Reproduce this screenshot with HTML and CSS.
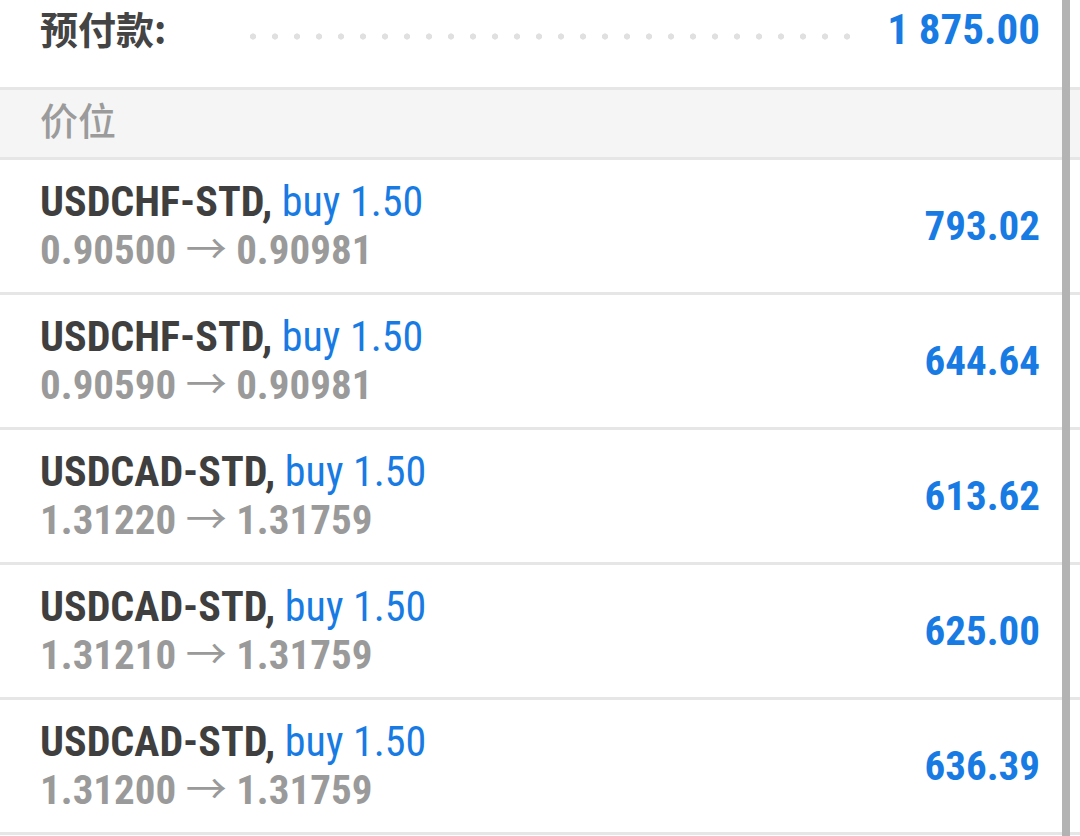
FILE: index.html
```html
<!DOCTYPE html>
<html lang="zh">
<head>
    <meta charset="UTF-8">
    <meta name="viewport" content="width=device-width, initial-scale=1.0">
    <title>价位</title>
    <link rel="stylesheet" href="styles.css">
</head>
<body>
<div class="screen">
    <div class="summary">
        <span class="summary-label">预付款:</span>
        <span class="leader"></span>
        <span class="summary-value">1 875.00</span>
    </div>

    <div class="section-title">价位</div>

    <ul class="positions">
        <li class="position">
            <div class="position-info">
                <div class="position-title"><span class="symbol">USDCHF-STD,</span> <span class="side">buy 1.50</span></div>
                <div class="position-prices">0.90500 <span class="arrow">→</span> 0.90981</div>
            </div>
            <div class="position-profit">793.02</div>
        </li>
        <li class="position">
            <div class="position-info">
                <div class="position-title"><span class="symbol">USDCHF-STD,</span> <span class="side">buy 1.50</span></div>
                <div class="position-prices">0.90590 <span class="arrow">→</span> 0.90981</div>
            </div>
            <div class="position-profit">644.64</div>
        </li>
        <li class="position">
            <div class="position-info">
                <div class="position-title"><span class="symbol">USDCAD-STD,</span> <span class="side">buy 1.50</span></div>
                <div class="position-prices">1.31220 <span class="arrow">→</span> 1.31759</div>
            </div>
            <div class="position-profit">613.62</div>
        </li>
        <li class="position">
            <div class="position-info">
                <div class="position-title"><span class="symbol">USDCAD-STD,</span> <span class="side">buy 1.50</span></div>
                <div class="position-prices">1.31210 <span class="arrow">→</span> 1.31759</div>
            </div>
            <div class="position-profit">625.00</div>
        </li>
        <li class="position">
            <div class="position-info">
                <div class="position-title"><span class="symbol">USDCAD-STD,</span> <span class="side">buy 1.50</span></div>
                <div class="position-prices">1.31200 <span class="arrow">→</span> 1.31759</div>
            </div>
            <div class="position-profit">636.39</div>
        </li>
    </ul>

    <div class="scrollbar"></div>
</div>
</body>
</html>
```

FILE: styles.css
```css
body {
    margin: 0;
    background: #fff;
    font-family: "Roboto Condensed", Roboto, "Noto Sans CJK SC", sans-serif;
    font-stretch: condensed;
}
.screen {
    position: relative;
    height: 836px;
    overflow: hidden;
}
.summary {
    display: flex;
    align-items: baseline;
    box-sizing: border-box;
    height: 90px;
    padding: 4px 40px 0;
    border-bottom: 3px solid #e6e6e6;
}
.summary-label {
    font-family: "Noto Sans CJK SC", sans-serif;
    font-size: 38px;
    font-weight: 700;
    line-height: 48px;
    color: #444;
}
.leader {
    flex: 1;
    align-self: flex-start;
    height: 7px;
    margin: 29px 30px 0 76px;
    background: radial-gradient(circle, #e0e0e0 2.8px, transparent 3.4px) 0 0 / 22px 7px repeat-x;
}
.summary-value {
    font-size: 43px;
    font-weight: 700;
    line-height: 48px;
    color: #187be3;
}
.section-title {
    box-sizing: border-box;
    height: 70px;
    padding: 5px 40px 0;
    background: #f5f5f5;
    border-bottom: 3px solid #e6e6e6;
    font-family: "Noto Sans CJK SC", sans-serif;
    font-size: 38px;
    font-weight: 500;
    line-height: 48px;
    color: #9b9b9b;
}
.positions {
    list-style: none;
    margin: 0;
    padding: 0;
}
.position {
    display: flex;
    align-items: center;
    justify-content: space-between;
    box-sizing: border-box;
    height: 135px;
    padding: 0 40px;
    border-bottom: 3px solid #e6e6e6;
}
.position-info {
    font-size: 41px;
    line-height: 48px;
}
.position-title {
    font-size: 42px;
}
.symbol {
    font-weight: 700;
    color: #3f3f3f;
}
.side {
    color: #187be3;
}
.position-prices {
    font-weight: 700;
    color: #9a9a9a;
}
.arrow {
    font-weight: 400;
}
.position-profit {
    font-size: 41px;
    font-weight: 700;
    color: #187be3;
}
.scrollbar {
    position: absolute;
    top: 0;
    bottom: 0;
    right: 10px;
    width: 8px;
    background: #b3b3b3;
}
```
